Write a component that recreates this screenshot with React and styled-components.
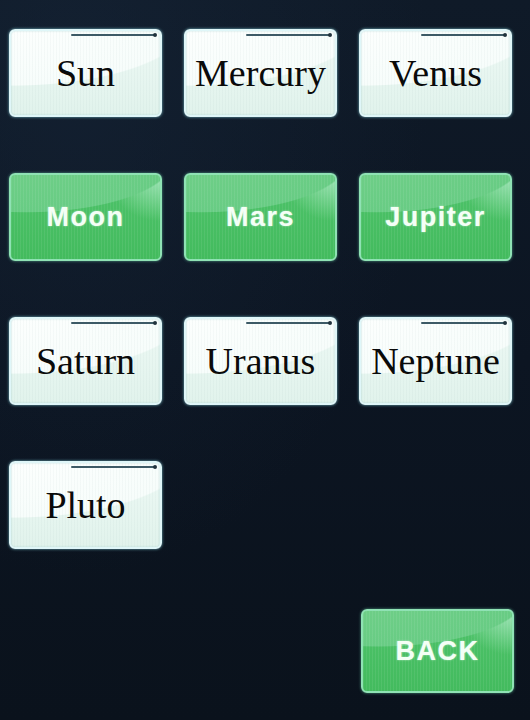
import React from 'react';
import styled, { createGlobalStyle, css } from 'styled-components';

const GlobalStyle = createGlobalStyle`
  html, body {
    margin: 0;
    padding: 0;
    background: #0c1522;
  }
  #root {
    min-height: 720px;
  }
`;

const planets = [
  { name: 'Sun', kind: 'light' },
  { name: 'Mercury', kind: 'light' },
  { name: 'Venus', kind: 'light' },
  { name: 'Moon', kind: 'green' },
  { name: 'Mars', kind: 'green' },
  { name: 'Jupiter', kind: 'green' },
  { name: 'Saturn', kind: 'light' },
  { name: 'Uranus', kind: 'light' },
  { name: 'Neptune', kind: 'light' },
  { name: 'Pluto', kind: 'light' },
];

export default function App() {
  return (
    <>
      <GlobalStyle />
      <Screen>
        <Grid>
          {planets.map((p) => (
            <Key key={p.name} $kind={p.kind}>
              {p.kind === 'light' && <Slot />}
              <Label $kind={p.kind}>{p.name}</Label>
            </Key>
          ))}
          <BackKey $kind="green">
            <Label $kind="green">BACK</Label>
          </BackKey>
        </Grid>
      </Screen>
    </>
  );
}

const Screen = styled.div`
  width: 530px;
  height: 720px;
  box-sizing: border-box;
  padding: 29px 0 0 9px;
  background:
    radial-gradient(ellipse at 15% 10%, rgba(24, 40, 60, 0.45), rgba(0, 0, 0, 0) 55%),
    linear-gradient(180deg, #0f1a28 0%, #0c1522 50%, #0a121c 100%);
  overflow: hidden;
`;

const Grid = styled.div`
  display: grid;
  grid-template-columns: repeat(3, 153px);
  grid-auto-rows: 88px;
  column-gap: 22px;
  row-gap: 56px;
`;

const lightSkin = css`
  background:
    repeating-linear-gradient(90deg, rgba(120, 150, 150, 0.05) 0 1px, rgba(0, 0, 0, 0) 1px 3px),
    radial-gradient(ellipse 190% 120% at 0% -10%, #fdfffe 0%, #f7fdfb 62%, rgba(0, 0, 0, 0) 63%),
    linear-gradient(180deg, #eef9f5 0%, #e1f3ec 100%);
  border: 2px solid #dff6f8;
  box-shadow: 0 0 3px rgba(140, 220, 230, 0.8), inset 0 0 2px rgba(150, 200, 200, 0.6);
`;

const greenSkin = css`
  background:
    repeating-linear-gradient(90deg, rgba(255, 255, 255, 0.07) 0 1px, rgba(0, 0, 0, 0) 1px 3px),
    radial-gradient(ellipse 170% 110% at 10% -20%, #70cf88 0%, #68cc84 58%, rgba(0, 0, 0, 0) 59%),
    radial-gradient(ellipse 35% 55% at 100% 0%, #a0e4b8 0%, rgba(160, 228, 184, 0) 100%),
    linear-gradient(180deg, #4ec36a 0%, #43bb5e 100%);
  border: 2px solid #8fe2b4;
  box-shadow: 0 0 3px rgba(120, 230, 190, 0.6);
`;

const Key = styled.div`
  position: relative;
  box-sizing: border-box;
  border-radius: 6px;
  display: flex;
  align-items: center;
  justify-content: center;
  ${({ $kind }) => ($kind === 'green' ? greenSkin : lightSkin)}
`;

const BackKey = styled(Key)`
  grid-column: 3;
  grid-row: 5;
  margin-top: 4px;
  margin-left: 2px;
  width: 153px;
`;

const Slot = styled.span`
  position: absolute;
  top: 3px;
  left: 60px;
  right: 4px;
  height: 2px;
  background: #3d5a66;
  border-radius: 1px;
  &::after {
    content: '';
    position: absolute;
    right: -1px;
    top: -1px;
    width: 4px;
    height: 4px;
    border-radius: 50%;
    background: #22333d;
  }
`;

const Label = styled.span`
  ${({ $kind }) =>
    $kind === 'green'
      ? css`
          font-family: 'Liberation Sans', Arial, sans-serif;
          font-weight: 700;
          font-size: 27px;
          letter-spacing: 1.5px;
          color: #f4fff6;
          text-shadow: 0 0 2px rgba(255, 255, 255, 0.6);
        `
      : css`
          font-family: 'Liberation Serif', 'Times New Roman', serif;
          font-size: 38px;
          color: #0a0a0a;
        `}
`;
